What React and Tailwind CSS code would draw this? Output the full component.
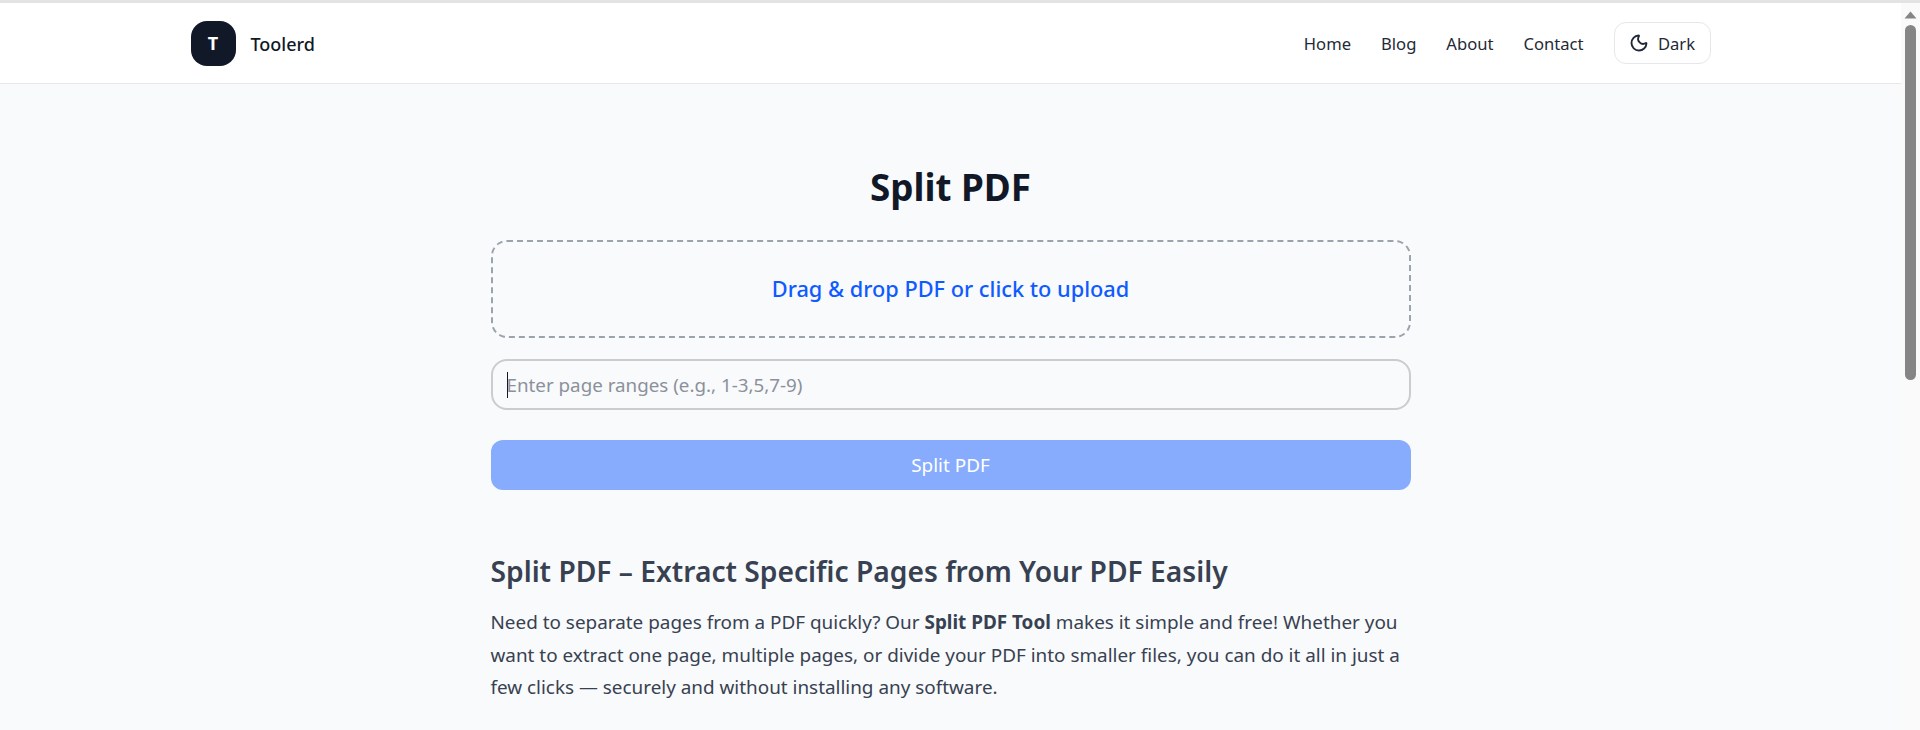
import { Moon } from 'lucide-react';

export default function App() {
  const links = ['Home', 'Blog', 'About', 'Contact'];

  return (
    <div className="h-screen overflow-hidden flex flex-col bg-white font-['Noto_Sans',sans-serif]">
      {/* Browser edge */}
      <div className="h-[3px] bg-[#e3e3e3] shrink-0" />

      <div className="flex flex-1 min-h-0">
        <div className="flex-1 min-w-0 bg-[#f9fafb]">
          {/* Header */}
          <header className="h-[81px] bg-white border-b border-[#e5e7eb]">
            <div className="w-[1520px] h-full mx-auto flex items-center justify-between">
              <div className="flex items-center gap-[15px]">
                <div className="w-[45px] h-[45px] rounded-2xl bg-[#111827] text-white flex items-center justify-center font-bold text-lg">
                  T
                </div>
                <span className="pt-[2px] text-[#111827] font-medium text-lg">Toolerd</span>
              </div>
              <nav className="flex items-center gap-[30px] text-[#1f2937] text-[16.6px]">
                {links.map((link) => (
                  <a key={link} className="pt-[2px]">{link}</a>
                ))}
                <button className="flex items-center gap-[9px] h-[42px] w-[97px] justify-center rounded-xl border border-[#e5e7eb]">
                  <Moon size={20} strokeWidth={2.25} />
                  <span className="pt-[2px]">Dark</span>
                </button>
              </nav>
            </div>
          </header>

          {/* Tool */}
          <main className="w-[920px] mx-auto pt-[76px]">
            <h1 className="text-[#111827] text-[36.8px] font-bold text-center leading-[54px]">Split PDF</h1>
            <div className="mt-[26px] h-[98px] rounded-2xl border-2 border-dashed border-[#9ca3af] flex items-center justify-center text-[#0f5bff] text-[21.75px] font-medium">
              Drag &amp; drop PDF or click to upload
            </div>
            <div className="relative mt-[21px]">
              <input
                className="w-full h-[51px] rounded-2xl border-2 border-[#cccccc] px-[14px] text-[18.8px] outline-none placeholder:text-[#8b919b]"
                placeholder="Enter page ranges (e.g., 1-3,5,7-9)"
              />
              <span className="absolute left-[16px] top-[13px] w-px h-[26px] bg-[#111827]" />
            </div>
            <button className="mt-[30px] w-full h-[50px] rounded-xl bg-[#88acfd] text-white text-[18.9px]">Split PDF</button>

            <section className="mt-[59px] text-[#374151]">
              <h2 className="text-[28.2px] font-semibold leading-[44px]">
                Split PDF – Extract Specific Pages from Your PDF Easily
              </h2>
              <p className="mt-[13px] text-[18.9px] leading-[32.6px]">
                Need to separate pages from a PDF quickly? Our <strong>Split PDF Tool</strong> makes it simple and free! Whether you want to extract one page, multiple pages, or divide your PDF into smaller files, you can do it all in just a few clicks — securely and without installing any software.
              </p>
            </section>
          </main>
        </div>

        {/* Scrollbar */}
        <div className="w-[19px] shrink-0 bg-[#fafafa] flex flex-col items-center">
          <svg width="13" height="8" viewBox="0 0 13 8" className="mt-[8px] text-[#858585]">
            <path d="M6.5 0.5 L12.5 7.5 L0.5 7.5 Z" fill="currentColor" />
          </svg>
          <div className="mt-[6px] w-[11px] h-[355px] rounded-full bg-[#858585]" />
        </div>
      </div>
    </div>
  );
}
